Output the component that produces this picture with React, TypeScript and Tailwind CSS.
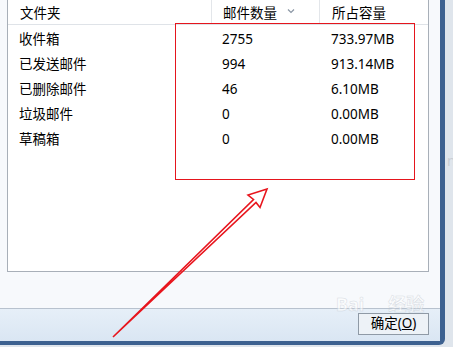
import React from "react";

const FONT = { fontFamily: '"Noto Sans", "Noto Sans CJK SC", sans-serif' };

const ROWS = [
  { name: "收件箱", count: "2755", size: "733.97MB" },
  { name: "已发送邮件", count: "994", size: "913.14MB" },
  { name: "已删除邮件", count: "46", size: "6.10MB" },
  { name: "垃圾邮件", count: "0", size: "0.00MB" },
  { name: "草稿箱", count: "0", size: "0.00MB" },
];

export default function App() {
  return (
    <div
      className="relative flex h-[347px] w-[453px] overflow-hidden bg-[#dfe5ec] text-[13.5px] text-black"
      style={FONT}
    >
      {/* dialog */}
      <div className="flex h-[345px] w-[445px] shrink-0 flex-col rounded-br-[6px] border-r-[5px] border-b-[4px] border-[#3d6190] bg-[#f7f9fc]">
        <div className="h-[308px] pl-[7px]">
          {/* list box */}
          <div className="-mt-px h-[273px] w-[422px] border border-[#a8afb8] bg-white">
            <div className="flex h-[25px] border-b border-[#dfe3e8] leading-none">
              <div className="flex w-[204px] items-center border-r border-[#e3e6ea] pl-[12px] pt-[4px]">
                文件夹
              </div>
              <div className="flex w-[108px] items-center border-r border-[#e3e6ea] pl-[11px] pt-[4px]">
                邮件数量
                <svg width="8" height="6" viewBox="0 0 8 6" className="ml-[10px] -mt-[6px]">
                  <path d="M1 1.5 L4 4.5 L7 1.5" fill="none" stroke="#8a96a4" strokeWidth="1.2" />
                </svg>
              </div>
              <div className="flex flex-1 items-center pl-[12px] pt-[4px]">所占容量</div>
            </div>
            <div className="pt-[2px]">
              {ROWS.map((r) => (
                <div key={r.name} className="flex h-[25px] items-center">
                  <div className="w-[204px] pl-[11px]">{r.name}</div>
                  <div className="w-[108px] pl-[10px]">{r.count}</div>
                  <div className="pl-[11px]">{r.size}</div>
                </div>
              ))}
            </div>
          </div>
        </div>
        {/* button bar */}
        <div className="flex flex-1 items-start justify-end border-t border-[#b8c2ce] bg-gradient-to-b from-[#e6eff8] to-[#dae6f3] pr-[11px] pt-[4px]">
          <button className="flex h-[22px] w-[71px] items-center justify-center border border-[#8f9aa6] bg-[#edf2f7] text-[13.5px] leading-none text-black">
            确定(<span className="underline">O</span>)
          </button>
        </div>
      </div>
      <div className="flex-1 overflow-hidden pt-[150px] pl-[2px] text-[14px] text-[#c9ced4]">n</div>

      {/* watermark */}
      <div
        className="pointer-events-none absolute left-[336px] top-[295px] text-[18px] font-bold leading-none text-white opacity-60"
        style={{ WebkitTextStroke: "0.5px #c3cad2" }}
      >
        Bai<span className="ml-[24px]">经验</span>
      </div>

      {/* red annotation */}
      <div className="pointer-events-none absolute left-[175px] top-[23px] h-[157px] w-[240px] border-[1.5px] border-[#e5151d]" />
      <svg className="pointer-events-none absolute left-0 top-0" width="453" height="347" viewBox="0 0 453 347">
        <polygon
          points="113,337 253.5,199.5 248,195 267,189 260,207.5 256,202.5"
          fill="none"
          stroke="#e8151d"
          strokeWidth="1.6"
          strokeLinejoin="miter"
        />
      </svg>
    </div>
  );
}
